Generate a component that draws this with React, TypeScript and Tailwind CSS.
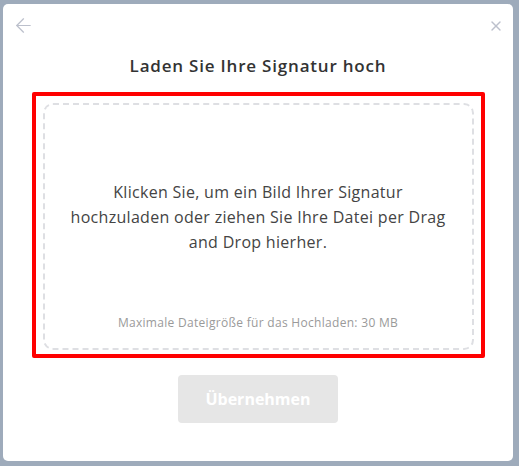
import { X, ArrowLeft } from 'lucide-react';

const font = { fontFamily: '"Open Sans", "Liberation Sans", sans-serif' };

export default function App() {
  return (
    <div className="w-[519px] h-[466px] bg-[#9eabbb] pt-[4px] pl-[3px]" style={font}>
      <div className="w-[510px] h-[457px] bg-white rounded-[5px] flex flex-col items-center">
        {/* Header icons */}
        <div className="w-full flex justify-between items-center pt-[9px] pl-[9px] pr-[9px] h-[34px]">
          <ArrowLeft className="w-[23px] h-[23px] text-[#bcc0cc]" strokeWidth={1.3} />
          <X className="w-[16px] h-[16px] text-[#bcc0cc]" strokeWidth={2} />
        </div>

        <h2 className="mt-[17px] text-[17px] leading-[22px] font-semibold tracking-[0.8px] text-[#333333]">
          Laden Sie Ihre Signatur hoch
        </h2>

        {/* Upload zone (highlighted) */}
        <div className="mt-[15px] w-[453px] h-[266px] border-4 border-[#ff0000] rounded-[2px] px-[7px] pt-[7px] pb-[4px]">
          <div className="h-full border-2 border-dashed border-[#dedfe3] rounded-[10px] flex flex-col items-center pt-[75px] pb-[17px] cursor-pointer">
            <p className="text-[16px] leading-[25px] tracking-[0.3px] text-[#444444] text-center">
              Klicken Sie, um ein Bild Ihrer Signatur
              <br />
              hochzuladen oder ziehen Sie Ihre Datei per Drag
              <br />
              and Drop hierher.
            </p>
            <p className="mt-auto text-[12px] leading-[16px] tracking-[0.3px] text-[#9a9a9a]">
              Maximale Dateigröße für das Hochladen: 30 MB
            </p>
          </div>
        </div>

        <button className="mt-[17px] w-[160px] h-[48px] rounded-[4px] bg-[#e6e6e6] text-white text-[16px] font-bold" disabled>
          Übernehmen
        </button>
      </div>
    </div>
  );
}
